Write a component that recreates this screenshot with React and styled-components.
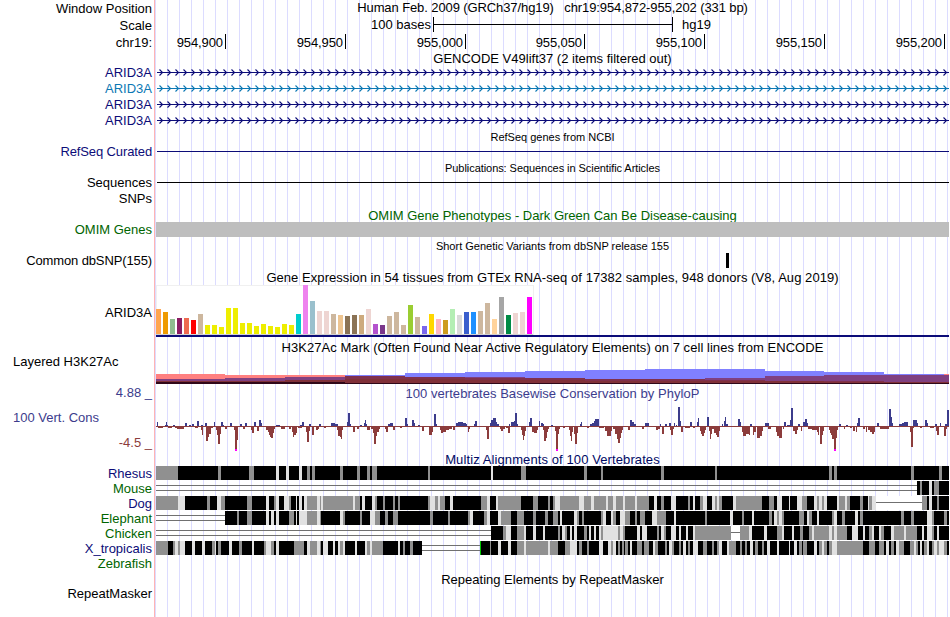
import React from 'react';
import styled, { createGlobalStyle } from 'styled-components';

const GlobalStyle = createGlobalStyle`
  body {
    margin: 0;
    background: #fff;
  }
`;

const Browser = styled.div`
  width: 949px;
  height: 617px;
  overflow: hidden;
  font-family: 'Liberation Sans', Arial, sans-serif;
  font-size: 13px;
  color: #000;
  background: linear-gradient(to right, #dcdcff 1px, transparent 1px) 167px 0 / 12px 100% repeat-x;
`;

const Track = styled.div`
  display: grid;
  grid-template-columns: 155px 795px;
  height: ${props => props.height}px;
`;

const Side = styled.div`
  display: flex;
  flex-direction: column;
  box-sizing: border-box;
  padding: ${props => props.top || 0}px 2px 0 13px;
  border-right: 1px solid #ffb4b4;
  background: #fff;
`;

const Label = styled.span`
  align-self: ${props => (props.left ? 'flex-start' : 'flex-end')};
  margin-top: ${props => props.gap || 0}px;
  line-height: 15px;
  letter-spacing: ${props => props.spacing || 0}px;
  white-space: nowrap;
  color: ${props => props.color || '#000'};
`;

const Title = styled.div`
  padding-top: ${props => props.top || 0}px;
  font-size: ${props => (props.small ? 11 : 13)}px;
  line-height: 15px;
  letter-spacing: ${props => props.spacing || 0}px;
  text-align: center;
  white-space: pre;
  color: ${props => props.color || '#000'};
`;

const ScaleBar = styled.div`
  display: flex;
  align-items: flex-start;
  line-height: 15px;
  padding-left: 216px;
`;

const ScaleText = styled.span`
  width: ${props => props.width}px;
  padding-left: ${props => props.indent || 0}px;
  white-space: nowrap;
`;

const Ruler = styled.div`
  display: flex;
`;

const RulerMark = styled.div`
  box-sizing: border-box;
  flex: none;
  width: ${props => props.width}px;
  height: 15px;
  padding-right: 2px;
  border-right: 1px solid #000;
  line-height: 17px;
  letter-spacing: -0.1px;
  text-align: right;
`;

const Plot = styled.svg`
  display: block;
  width: 795px;
  height: ${props => props.height}px;
  shape-rendering: crispEdges;
`;

const NAVY = '#0c0c78';
const GREEN = '#006400';
const BLUE = '#3c3c8c';
const RED = '#8c3c3c';

const TICKS = [
  ['954,900', 71], ['954,950', 120], ['955,000', 120], ['955,050', 119],
  ['955,100', 120], ['955,150', 120], ['955,200', 120],
];

const GENES = [NAVY, '#0c78b4', NAVY, NAVY];

// [height, color] for each tissue
const TISSUES = [
  [25, '#ffa54f'], [22, '#ee9a00'], [15, '#8fbc8f'], [16, '#8b1c62'], [16, '#ee6a50'],
  [14, '#ff0000'], [20, '#cdb79e'], [9, '#eeee00'], [9, '#eeee00'], [7, '#eeee00'],
  [26, '#eeee00'], [26, '#eeee00'], [11, '#eeee00'], [11, '#eeee00'], [8, '#eeee00'],
  [10, '#eeee00'], [8, '#eeee00'], [7, '#eeee00'], [10, '#eeee00'], [9, '#eeee00'],
  [20, '#00cdcd'], [49, '#ee82ee'], [33, '#9ac0cd'], [23, '#eed5d2'], [23, '#eed5d2'],
  [20, '#cdb79e'], [19, '#eec591'], [18, '#8b7355'], [19, '#8b7355'], [19, '#cdaa7d'],
  [25, '#eed5d2'], [10, '#b452cd'], [9, '#7a378b'], [18, '#cdb79e'], [22, '#cdb79e'],
  [9, '#cdb79e'], [29, '#9acd32'], [17, '#cdb79e'], [8, '#7a67ee'], [20, '#ffd700'],
  [15, '#ffb6c1'], [14, '#cd9b1d'], [25, '#b4eeb4'], [19, '#d9d9d9'], [22, '#3a5fcd'],
  [22, '#1e90ff'], [23, '#cdb79e'], [31, '#cdb79e'], [15, '#ffd39b'], [37, '#a6a6a6'],
  [19, '#008b45'], [21, '#eed5d2'], [22, '#eed5d2'], [37, '#ff00ff'],
];

// stepped layers, "x:top" pairs, painted back to front
const HISTONE = [
  ['#ff8080', '156:374 225:375 345:384 944:374'],
  ['#8080ff', '345:375 405:373 465:372 525:371 585:370 645:369 765:371 824:372 884:374 944:375'],
  ['#804080', '156:379 225:378 285:377 345:376 405:377 465:377 525:378 585:379 705:378 765:376 824:375'],
  ['#80304c', '345:376 405:377 465:378 525:378 585:379 645:379 705:380 765:381 824:381 884:382'],
  ['#803038', '156:381 285:380 345:379 465:380 585:381 824:382'],
  ['#300818', '156:382 345:383'],
];

const CONSERVATION = `
157,1,4 165,3,1 166,1,4 173,2,1 185,2,3 189,2,1 192,2,2 197,2,5 201,2,1 205,2,3 214,1,4 221,2,4 222,2,1
230,2,3 240,2,2 245,2,3 254,2,4 259,2,6 261,1,3 276,4,1 300,2,1 302,2,4 309,2,2 319,2,2 331,4,3 335,3,2
347,1,4 348,2,13 350,1,2 360,2,1 364,2,3 365,1,6 366,1,2 388,2,2 390,3,3 405,2,8 407,1,2 412,2,6 414,1,3 418,2,1
434,2,12 436,1,2 456,2,3 458,5,4 463,3,3 465,2,2 474,1,2 475,2,5 490,1,3 491,2,6 493,3,8 496,1,4 497,2,2
509,1,2 511,3,4 514,1,5 515,2,13 517,1,2 529,1,4 530,2,8 539,1,5 541,2,3 543,1,2 551,2,1 580,1,2 581,1,4
590,2,2 592,2,3 594,2,5 595,4,7 630,2,6 632,2,4 634,2,2 645,4,3 660,1,2 665,2,2 669,2,3 674,1,3 676,1,1
678,2,19 680,1,5 690,2,4 697,1,4 698,1,8 707,2,9 722,1,2 724,1,5 725,1,9 726,2,2 738,2,7 740,1,4 750,2,2
765,4,3 784,2,4 787,3,1 790,1,6 791,2,18 798,2,2 803,2,4 805,2,7 807,1,3 839,2,2 846,2,1 857,1,3 858,2,8
877,2,3 889,2,17 891,1,9 892,1,3 899,3,2 902,4,3 904,4,4 913,4,6 917,1,3 925,2,6 927,1,3 935,2,2 940,1,3
945,2,2 947,3,16
158,5,-2 168,4,-2 175,4,-2 177,7,-3 195,3,-2 201,1,-4 202,1,-9 206,2,-15 208,1,-11 209,2,-8 211,2,-2 216,2,-4
217,1,-9 218,2,-18 220,1,-8 225,2,-3 234,2,-4 235,2,-23 237,1,-14 243,2,-3 251,1,-4 252,2,-7 257,2,-5
266,2,-4 268,1,-6 269,1,-9 270,2,-11 271,2,-12 273,1,-7 274,1,-3 281,4,-3 289,2,-3 292,1,-6 293,1,-11
294,2,-9 296,1,-7 298,4,-2 306,1,-6 307,2,-16 309,1,-5 312,2,-9 316,2,-4 318,1,-3 324,2,-2 337,1,-4
338,2,-10 340,1,-11 341,1,-13 342,1,-4 353,2,-6 357,2,-3 367,3,-4 371,2,-3 373,1,-7 374,2,-18 376,1,-10
377,2,-6 379,1,-3 385,1,-3 386,2,-6 393,2,-4 400,2,-2
422,2,-5 429,3,-9 432,1,-6 440,1,-4 441,2,-7 443,3,-6 446,3,-4 449,3,-3 453,2,-4 468,1,-6 469,1,-3 486,1,-4
487,2,-13 500,1,-3 501,2,-5 503,2,-3 506,2,-2 508,2,-7 521,1,-4 522,1,-9 523,1,-14 524,1,-10 525,1,-5
532,2,-6 534,3,-7 537,1,-4 543,1,-4 544,2,-15 546,1,-12 547,1,-6 548,1,-3 555,1,-5 556,2,-23 558,1,-8
559,1,-3 563,2,-2 569,1,-4 570,1,-10 571,1,-15 572,1,-6 574,1,-8 575,2,-18 577,1,-7 587,2,-2 599,5,-2
605,2,-5 607,4,-10 611,1,-5 613,2,-3 615,2,-8 617,1,-13 618,2,-17 620,1,-12 621,1,-7 622,1,-4 628,2,-4
642,2,-3 656,2,-4 658,2,-3 662,2,-8 670,1,-4 671,2,-9 673,1,-3 681,2,-6 685,5,-2 693,2,-2 700,1,-5 701,1,-8
702,2,-10 704,1,-7 705,1,-4 709,1,-5 710,1,-13 711,1,-8 712,2,-3 714,2,-7 716,2,-9 717,2,-11 719,1,-5
742,1,-6 743,3,-10 746,3,-8 749,1,-9 753,1,-9 754,2,-6 757,3,-12 760,2,-10 762,1,-5 768,3,-3 776,2,-6
777,2,-10 779,3,-12 781,1,-6 783,1,-3 793,2,-5 795,2,-8 797,1,-4 801,1,-5 808,4,-3 812,5,-4 817,1,-6
818,1,-9 820,2,-18 822,1,-9 823,1,-5 829,1,-4 830,2,-7 831,1,-9 832,2,-13 834,2,-23 836,1,-12 837,1,-4
844,1,-3 850,2,-2 853,2,-5 856,1,-6 863,2,-3 866,1,-6 868,2,-4 870,2,-6 872,2,-8 874,1,-6 880,9,-3
910,1,-6 911,2,-21 913,1,-2 920,2,-2 930,4,-2 936,1,-5 937,2,-9 944,2,-10 946,1,-3`
  .trim().split(/\s+/).map(d => d.split(',').map(Number));

// K/G/L are black, gray and light blocks, = and - are gap lines, N an insert; each runs to the next x
const SPECIES = [
  ['Rhesus', NAVY, `G156 K178 G218 K221 G249 K254 L276 K279 L286 K289 L299 K302 G307 K310 G312 K315 G340 K343 G357 K360
    G367 K370 G372 K377 G428 K430 L491 K493 G521 K526 G584 K587 G601 K603 G661 K664 G715 K717 G829 K832 G834 K837
    G911 K914 G939 K942`],
  ['Mouse', GREEN, '=156 K917 G920 K922 L929 K932 G934 K939'],
  ['Dog', NAVY, `G156 L178 K185 G207 K210 L217 G221 K225 G247 K252 L266 K269 G274 L276 K279 L284 G289 K291 L296 K297
    L299 K302 L304 G307 L317 G320 L321 G323 L353 G355 K360 L362 K365 L372 G375 K377 G383 K385 G393 K395 G398 K400
    G428 L430 G435 L438 G440 K445 L450 K453 G481 L487 K490 L496 G498 K521 G533 K538 G548 K550 G553 L555 G560 L579
    G584 L591 G594 L606 G608 L613 G616 L623 G625 L635 G637 K649 L654 K657 G661 K664 L671 K676 G688 K690 L693 K695
    G700 L703 K707 L712 G715 L717 G719 K722 L733 G736 K762 G769 K774 L777 K782 L789 K790 L797 G802 K807 L814 G817
    L819 G822 L824 K827 L837 G839 L845 G847 K850 G860 K863 L868 G869 L872 -876 G922 K927 L929 K932 G937 K939`],
  ['Elephant', GREEN, `=156 K225 G237 K239 G247 K252 L266 K269 L271 K274 L276 K279 G289 K294 L296 K297 L299 G307 L317
    G320 K321 L340 G343 K345 G360 K362 L370 G375 K380 G385 K388 G393 K398 G430 K433 G448 K450 G468 L470 K473 G484
    L487 K490 L498 G501 K511 G517 K524 G533 K536 G545 K548 G553 K558 L560 K562 L574 G577 K579 G582 K584 G601 L603
    K606 L611 G613 K616 L620 G625 K630 G635 K637 G640 K645 L652 G657 K666 L674 K676 G705 K707 L730 K733 G742 K744
    L752 K754 G769 K772 L774 G777 L779 G782 K784 G799 K804 L807 G809 K812 L817 K819 G832 L834 K837 G842 K845 L855
    K858 G860 K863 G901 K904 G911 K914 L927 G932 K934 G944 K947`],
  ['Chicken', GREEN, `=156 K491 G503 L506 K511 G517 L524 K526 L533 K536 L543 K545 G558 K560 L562 G565 K567 L570 K572
    L574 K577 G584 K587 L589 K591 L594 K596 L599 G601 L603 G618 L620 G623 K625 L637 K640 L642 K647 G657 K659 L661
    G664 K666 L671 K676 L679 K681 L686 K688 L693 G695 -731 G740 L749 K752 L764 K767 G777 L782 K784 L792 K794 G800
    K803 G809 L812 G814 L829 G832 L834 G837 K847 L852 K858 L863 K865 G869 L872 K874 L879 G881 K884 L891 G894 L904
    G906 K917 L922 K924 L927 G932 K934 L937 K939`],
  ['X_tropicalis', NAVY, `G156 K168 G173 L175 G178 L180 K185 L192 K195 L202 K205 G212 L215 K216 G218 K221 L229 K232
    G239 K242 L252 K254 G264 L266 G271 K274 L276 K279 G294 K304 L307 G310 L317 G320 K321 L323 K328 L333 K335 L338
    G340 L343 K345 L355 K357 L365 G367 L370 G372 K383 L398 K400 G403 K405 G410 K413 =422 N480 K481 G490 K491 L498
    K501 L508 K511 G517 L524 G526 L548 G550 K558 G565 L570 K577 G579 K582 G587 K589 L599 K603 L608 G611 L613 K616
    G618 K620 G622 K624 G625 K628 L630 K632 G637 K642 G644 K649 L653 G655 K658 G665 K667 L669 G672 K674 G679 K681
    L683 K686 G688 K690 L693 K698 G703 K707 G712 K714 G717 L719 K722 L727 G729 K736 G740 K742 G745 K747 L750 K753
    G755 K758 G762 K764 L767 K770 L777 K779 L789 K790 L794 K797 G799 K802 G803 K807 L814 K817 G819 L822 G824 K827
    G829 L832 G837 K863 G869 K875 G879 K884 L886 K889 G891 K894 L896 G899 K904 G910 L914 G916 K918 L920 K922 G924
    L927 K929 G932 L934 G937 L939 G944 K947`],
  ['Zebrafish', GREEN, ''],
];

const BLOCKS = { K: '#000', G: '#909090', L: '#e1e1e1', N: '#00c800' };

const TitleTrack = ({ height, label, labelColor, labelTop, children, ...rest }) => (
  <Track height={height}>
    <Side top={labelTop}>{label && <Label color={labelColor}>{label}</Label>}</Side>
    <Title {...rest}>{children}</Title>
  </Track>
);

const GeneArrows = ({ color }) => {
  let arrows = '';
  for (let x = 162.5; x < 952; x += 8) {
    arrows += `M${x - 3} 4.5L${x} 7.5L${x - 3} 10.5`;
  }
  return (
    <Plot height={16} viewBox="155 -1 795 16">
      <rect x="157" y="7" width="793" height="1" fill={color} />
      <path d={arrows} fill="none" stroke={color} strokeWidth="1.1" shapeRendering="auto" />
    </Plot>
  );
};

const Expression = () => (
  <Plot height={53} viewBox="155 285 795 53">
    <rect x="156.5" y="285.5" width="377" height="49" fill="#fff" stroke="#f0f0f0" />
    <rect x="156" y="334" width="377" height="1" fill="#d2d2d2" />
    {TISSUES.map(([h, fill], i) => (
      <rect key={i} x={156 + i * 7} y={334 - h} width="5" height={h} fill={fill} />
    ))}
    <rect x="156" y="335" width="794" height="2" fill={NAVY} />
  </Plot>
);

const Histone = () => (
  <Plot height={28} viewBox="155 356 795 28">
    {HISTONE.map(([fill, steps]) => {
      const points = steps.split(' ').map(s => s.split(':').map(Number));
      return points.map(([x, y], i) => {
        const end = i + 1 < points.length ? points[i + 1][0] : 950;
        return <rect key={fill + x} x={x} y={y} width={end - x} height={384 - y} fill={fill} />;
      });
    })}
  </Plot>
);

const Wiggle = () => (
  <Plot height={50} viewBox="155 402 795 50">
    <rect x="156" y="426" width="794" height="1" fill={RED} />
    {CONSERVATION.map(([x, w, h], i) => (
      <rect key={i} x={x} y={h > 0 ? 426 - h : 426} width={w} height={Math.abs(h)} fill={h > 0 ? BLUE : RED} />
    ))}
    {[235, 556, 834].map(x => (
      <rect key={x} x={x} y="449" width="2" height="2" fill="#f0f" />
    ))}
  </Plot>
);

const Alignment = ({ runs }) => {
  const items = runs.split(/\s+/).filter(Boolean).map(r => [r[0], Number(r.slice(1))]);
  return (
    <Plot height={15} viewBox="155 0 795 15">
      {items.map(([kind, x], i) => {
        const width = (i + 1 < items.length ? items[i + 1][1] : 950) - x;
        if (kind === '=') {
          return <path key={x} d={`M${x} 4.5h${width}M${x} 9.5h${width}`} stroke="#707070" />;
        }
        if (kind === '-') {
          return (
            <g key={x}>
              <rect x={x} y="0" width={width} height="14" fill="#fff" />
              <rect x={x} y="6" width={width} height="1" fill="#707070" />
            </g>
          );
        }
        return <rect key={x} x={x} y="0" width={width} height="14" fill={BLOCKS[kind]} />;
      })}
    </Plot>
  );
};

const App = () => (
  <>
    <GlobalStyle />
    <Browser>
      <TitleTrack height={17} label="Window Position" labelTop={1} spacing={-0.1}>
        {'Human Feb. 2009 (GRCh37/hg19)   chr19:954,872-955,202 (331 bp)'}
      </TitleTrack>
      <Track height={17}>
        <Side top={1}><Label>Scale</Label></Side>
        <ScaleBar>
          <ScaleText width={62}>100 bases</ScaleText>
          <svg width="240" height="16" shapeRendering="crispEdges">
            <path d="M0.5 0v15M239.5 0v15M0 7.5h240" stroke="#000" />
          </svg>
          <ScaleText width={40} indent={9}>hg19</ScaleText>
        </ScaleBar>
      </Track>
      <Track height={17}>
        <Side top={1}><Label>chr19:</Label></Side>
        <Ruler>
          {TICKS.map(([text, width]) => (
            <RulerMark key={text} width={width}>{text}</RulerMark>
          ))}
        </Ruler>
      </Track>
      <TitleTrack height={13}>GENCODE V49lift37 (2 items filtered out)</TitleTrack>
      {GENES.map((color, i) => (
        <Track key={i} height={16}>
          <Side top={1}><Label color={color}>ARID3A</Label></Side>
          <GeneArrows color={color} />
        </Track>
      ))}
      <TitleTrack height={16} small top={2}>RefSeq genes from NCBI</TitleTrack>
      <Track height={16}>
        <Side><Label color={NAVY} spacing={-0.12}>RefSeq Curated</Label></Side>
        <Plot height={16} viewBox="155 144 795 16">
          <rect x="157" y="151" width="793" height="1" fill={NAVY} />
        </Plot>
      </Track>
      <TitleTrack height={15} small top={1} spacing={-0.06}>
        Publications: Sequences in Scientific Articles
      </TitleTrack>
      <Track height={15}>
        <Side><Label>Sequences</Label></Side>
        <Plot height={15} viewBox="155 175 795 15">
          <rect x="157" y="182" width="793" height="1" fill="#000" />
        </Plot>
      </Track>
      <Track height={16}>
        <Side top={1}><Label>SNPs</Label></Side>
      </Track>
      <TitleTrack height={16} top={2} color={GREEN}>
        OMIM Gene Phenotypes - Dark Green Can Be Disease-causing
      </TitleTrack>
      <Track height={15}>
        <Side><Label color={GREEN}>OMIM Genes</Label></Side>
        <Plot height={15} viewBox="155 222 795 15">
          <rect x="156" y="222" width="794" height="15" fill="#bebebe" />
        </Plot>
      </Track>
      <TitleTrack height={16} small top={2}>Short Genetic Variants from dbSNP release 155</TitleTrack>
      <Track height={15}>
        <Side><Label spacing={-0.12}>Common dbSNP(155)</Label></Side>
        <Plot height={15} viewBox="155 253 795 15">
          <rect x="726" y="253" width="3" height="15" fill="#000" />
        </Plot>
      </Track>
      <TitleTrack height={17} top={2} spacing={0.055}>
        Gene Expression in 54 tissues from GTEx RNA-seq of 17382 samples, 948 donors (V8, Aug 2019)
      </TitleTrack>
      <Track height={53}>
        <Side top={20}><Label>ARID3A</Label></Side>
        <Expression />
      </Track>
      <TitleTrack height={18} top={2} spacing={0.05}>
        H3K27Ac Mark (Often Found Near Active Regulatory Elements) on 7 cell lines from ENCODE
      </TitleTrack>
      <Track height={28}>
        <Side><Label left gap={-2}>Layered H3K27Ac</Label></Side>
        <Histone />
      </Track>
      <TitleTrack height={18} top={2} label="4.88 _" labelTop={1} labelColor={BLUE} color={BLUE} spacing={0.04}>
        100 vertebrates Basewise Conservation by PhyloP
      </TitleTrack>
      <Track height={50}>
        <Side top={8}>
          <Label left color={BLUE}>100 Vert. Cons</Label>
          <Label gap={10} color={RED}>-4.5 _</Label>
        </Side>
        <Wiggle />
      </Track>
      <TitleTrack height={14} color="#000a64" spacing={0.1}>Multiz Alignments of 100 Vertebrates</TitleTrack>
      {SPECIES.map(([name, color, runs]) => (
        <Track key={name} height={15}>
          <Side><Label color={color}>{name}</Label></Side>
          <Alignment runs={runs} />
        </Track>
      ))}
      <TitleTrack height={15} top={1}>Repeating Elements by RepeatMasker</TitleTrack>
      <Track height={31}>
        <Side><Label>RepeatMasker</Label></Side>
      </Track>
    </Browser>
  </>
);

export default App;
